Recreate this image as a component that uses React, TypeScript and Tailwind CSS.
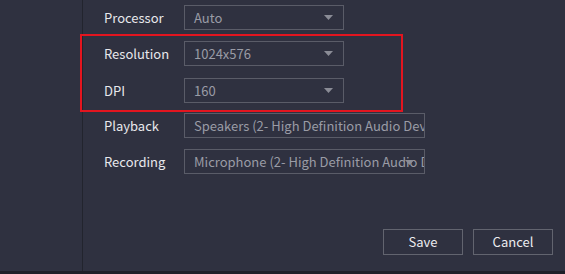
import React from "react";

const Caret = () => (
  <svg width="9" height="5" viewBox="0 0 9 5" className="shrink-0">
    <path d="M0 0 H9 L4.5 5 Z" fill="#8a8c96" />
  </svg>
);

function Row({
  label,
  value,
  wide,
  caret = true,
  mt,
}: {
  label: string;
  value: string;
  wide?: boolean;
  caret?: boolean;
  mt: string;
}) {
  return (
    <div className={`flex items-center h-[25px] ${mt}`}>
      <div className="w-[80px] text-[13px] text-[#e8e8ec]">{label}</div>
      <div
        className={`relative h-[25px] border border-[#5a5c68] flex items-center pl-[9px] pr-[10px] overflow-hidden ${
          wide ? "w-[241px]" : "w-[160px] justify-between"
        }`}
      >
        <span className="text-[13px] text-[#9a9ca6] whitespace-nowrap">{value}</span>
        {caret && !wide && <Caret />}
        {caret && wide && (
          <span className="absolute right-[10px] top-[10px]">
            <Caret />
          </span>
        )}
      </div>
    </div>
  );
}

export default function App() {
  return (
    <div
      className="w-[565px] h-[274px] bg-[#1e1f28] flex flex-col"
      style={{ fontFamily: '"Noto Sans CJK SC", "Noto Sans", sans-serif' }}
    >
      <div className="relative flex h-[271px] bg-[#2f3140]">
        <div className="w-[83px] border-r border-[#22242e]" />
        <div className="flex-1 flex flex-col pl-[21px]">
          <Row label="Processor" value="Auto" mt="mt-[5px]" />
          <Row label="Resolution" value="1024x576" mt="mt-[11px]" />
          <Row label="DPI" value="160" mt="mt-[12px]" />
          <Row
            label="Playback"
            value="Speakers (2- High Definition Audio Device)"
            wide
            caret={false}
            mt="mt-[10px]"
          />
          <Row
            label="Recording"
            value="Microphone (2- High Definition Audio Device)"
            wide
            mt="mt-[11px]"
          />
          <div className="flex justify-end gap-[10px] mt-[55px] pr-[12px]">
            <button className="w-[80px] h-[26px] border border-[#62646f] text-[13px] text-[#ececf0]">
              Save
            </button>
            <button className="w-[80px] h-[26px] border border-[#62646f] text-[13px] text-[#ececf0]">
              Cancel
            </button>
          </div>
        </div>
        <div className="absolute left-[80px] top-[34px] w-[323px] h-[78px] border-2 border-[#e3151f]" />
      </div>
    </div>
  );
}
